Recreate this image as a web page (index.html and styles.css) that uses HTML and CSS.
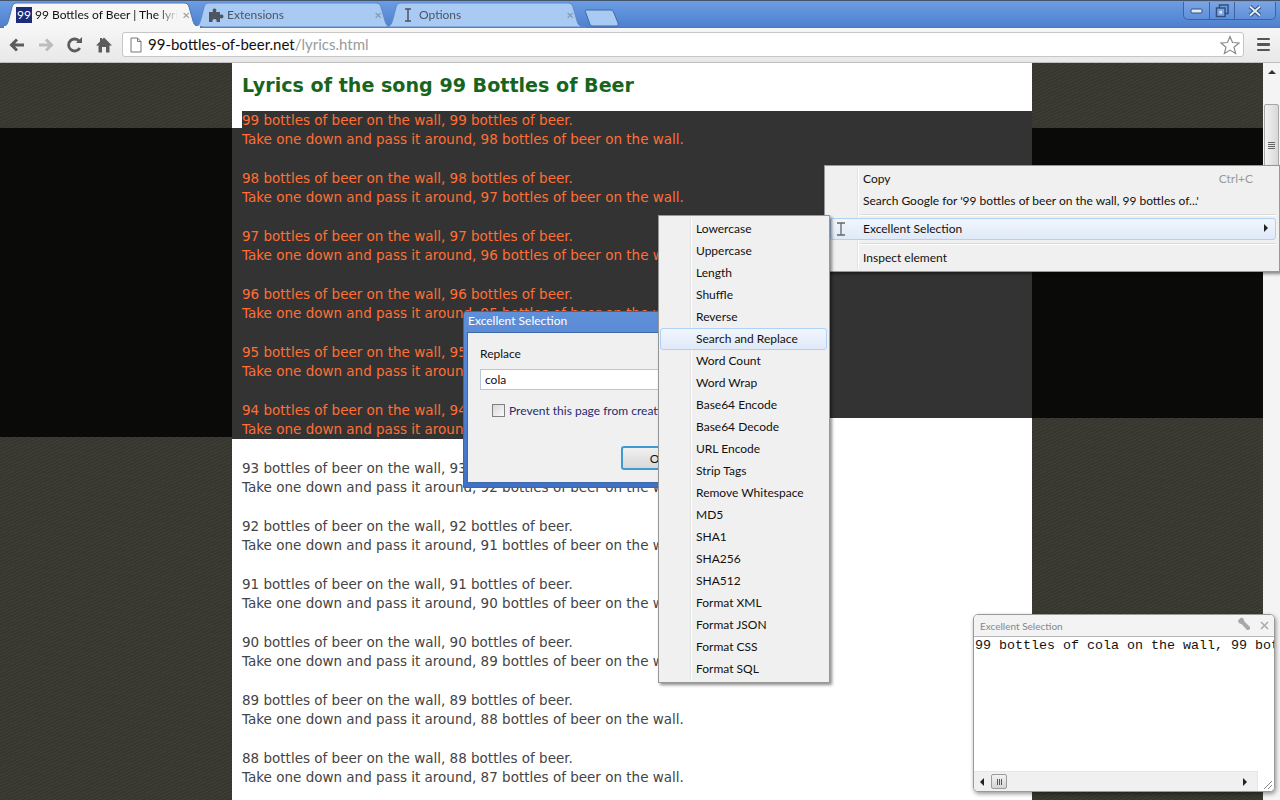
FILE: index.html
```html
<!DOCTYPE html>
<html lang="en">
<head>
    <meta charset="UTF-8">
    <meta name="viewport" content="width=device-width, initial-scale=1.0">
    <title>99 Bottles of Beer | The lyrics</title>
    <link rel="stylesheet" href="styles.css">
</head>
<body>
<div class="browser">
    <!-- Title bar and tabs -->
    <div class="titlebar">
        <div class="tabs">
            <div class="tab tab-active">
                <svg class="tab-shape" width="200" height="24" viewBox="0 0 200 24"><path d="M0,24 C5,24 6,20 8,12 L10,4 C11,1 12,0 15,0 L182,0 C185,0 186,1 187,4 L191,18 C192,22 194,24 200,24 Z" fill="#f6f6f6" stroke="#4f76b4"/></svg>
                <span class="favicon">99</span>
                <span class="tab-title">99 Bottles of Beer | The lyrics</span>
                <span class="tab-close">&#x2715;</span>
            </div>
            <div class="tab">
                <svg class="tab-shape" width="200" height="24" viewBox="0 0 200 24"><path d="M0,24 C5,24 6,20 8,12 L10,4 C11,1 12,0 15,0 L182,0 C185,0 186,1 187,4 L191,18 C192,22 194,24 200,24 Z" fill="#a9caf3" stroke="#5f88c6"/></svg>
                <svg class="tab-icon" width="16" height="16" viewBox="0 0 16 16"><path d="M1,5 H5 C4,3 5,1.500 6.500,1.500 C8,1.500 9,3 8,5 H12 V8 C14,7 15.500,8 15.500,9.500 C15.500,11 14,12 12,11 V15 H8.500 C9,13 8,12 6.500,12 C5,12 4,13 4.500,15 H1 Z" fill="#4d5560"/></svg>
                <span class="tab-title dim">Extensions</span>
                <span class="tab-close dim">&#x2715;</span>
            </div>
            <div class="tab">
                <svg class="tab-shape" width="200" height="24" viewBox="0 0 200 24"><path d="M0,24 C5,24 6,20 8,12 L10,4 C11,1 12,0 15,0 L182,0 C185,0 186,1 187,4 L191,18 C192,22 194,24 200,24 Z" fill="#a9caf3" stroke="#5f88c6"/></svg>
                <svg class="tab-icon" width="16" height="16" viewBox="0 0 16 16"><path d="M5,2 H11 M8,2 V14 M5,14 H11" fill="none" stroke="#4d5560" stroke-width="1.500"/></svg>
                <span class="tab-title dim">Options</span>
                <span class="tab-close dim">&#x2715;</span>
            </div>
            <svg class="new-tab" width="34" height="18" viewBox="0 0 34 18"><path d="M1,1 H25 C27,1 28,2 29,4 L33,14 C33.500,16 33,17 31,17 H8 C6,17 5,16 4.500,14 L0.500,3 C0.300,2 0.500,1 1,1 Z" fill="#a9caf3" stroke="#3f6aa8"/></svg>
        </div>
        <div class="window-controls">
            <div class="win-btn">
                <svg width="14" height="8" viewBox="0 0 14 8"><rect x="1" y="2" width="11" height="4" rx="1" fill="#dfe9f7" stroke="#30507f"/></svg>
            </div>
            <div class="win-btn win-max">
                <svg width="14" height="14" viewBox="0 0 14 14"><path d="M4.500,4 V1 H13 V9.500 H10" fill="none" stroke="#30507f" stroke-width="1.500"/><rect x="1.500" y="4" width="8.500" height="8.500" fill="#7fa6e0" stroke="#30507f" stroke-width="1.500"/><rect x="4.500" y="7" width="2.500" height="2.500" fill="#dfe9f7"/></svg>
            </div>
            <div class="win-btn win-close">
                <svg width="14" height="12" viewBox="0 0 14 12"><path d="M2,1.500 L12,10.500 M12,1.500 L2,10.500" stroke="#30507f" stroke-width="3.800"/><path d="M2,1.500 L12,10.500 M12,1.500 L2,10.500" stroke="#e4ecf8" stroke-width="1.800"/></svg>
            </div>
        </div>
    </div>

    <!-- Toolbar -->
    <div class="toolbar">
        <svg class="tool-btn" width="18" height="18" viewBox="0 0 18 18"><path d="M16,9 H4 M9,3.500 L3.500,9 L9,14.500" fill="none" stroke="#5c5c5c" stroke-width="3"/></svg>
        <svg class="tool-btn" width="18" height="18" viewBox="0 0 18 18"><path d="M2,9 H14 M9,3.500 L14.500,9 L9,14.500" fill="none" stroke="#bcbcbc" stroke-width="3"/></svg>
        <svg class="tool-btn" width="18" height="18" viewBox="0 0 18 18"><path d="M13.800,12 A6,6 0 1 1 13.500,5.500" fill="none" stroke="#5c5c5c" stroke-width="2.800"/><path d="M10,7 H16 V1 Z" fill="#5c5c5c"/></svg>
        <svg class="tool-btn" width="18" height="18" viewBox="0 0 18 18"><path d="M9,1.500 L17,9.500 H14.500 V16.500 H11 V11 H7 V16.500 H3.500 V9.500 H1 L5,5.500 V2 H7 V3.500 Z" fill="#5c5c5c"/></svg>
        <div class="omnibox">
            <svg class="page-icon" width="12" height="16" viewBox="0 0 12 16"><path d="M1,1 H7.500 L11,4.500 V15 H1 Z M7.500,1 V4.500 H11" fill="#fff" stroke="#777"/></svg>
            <span class="url">99-bottles-of-beer.net<span class="url-path">/lyrics.html</span></span>
            <svg class="star" width="20" height="20" viewBox="0 0 20 20"><path d="M10,1.500 L12.500,7.500 L19,8 L14,12.200 L15.600,18.500 L10,15.100 L4.400,18.500 L6,12.200 L1,8 L7.500,7.500 Z" fill="#fff" stroke="#8c8c8c" stroke-width="1.200"/></svg>
        </div>
        <div class="menu-btn"><i></i><i></i><i></i></div>
    </div>

    <!-- Page -->
    <div class="viewport">
        <div class="gutter gutter-left"><div class="sel-band"></div></div>
        <div class="content">
            <h1>Lyrics of the song 99 Bottles of Beer</h1>
            <div class="selected">
                <p>99 bottles of beer on the wall, 99 bottles of beer.<br>Take one down and pass it around, 98 bottles of beer on the wall.</p>
                <p>98 bottles of beer on the wall, 98 bottles of beer.<br>Take one down and pass it around, 97 bottles of beer on the wall.</p>
                <p>97 bottles of beer on the wall, 97 bottles of beer.<br>Take one down and pass it around, 96 bottles of beer on the wall.</p>
                <p>96 bottles of beer on the wall, 96 bottles of beer.<br>Take one down and pass it around, 95 bottles of beer on the wall.</p>
                <p>95 bottles of beer on the wall, 95 bottles of beer.<br>Take one down and pass it around, 94 bottles of beer on the wall.</p>
                <p>94 bottles of beer on the wall, 94 bottles of beer.</p>
            </div>
            <p class="selected-end">Take one down and pass it around, 93 bottles of beer on the wall.</p>
            <p>93 bottles of beer on the wall, 93 bottles of beer.<br>Take one down and pass it around, 92 bottles of beer on the wall.</p>
            <p>92 bottles of beer on the wall, 92 bottles of beer.<br>Take one down and pass it around, 91 bottles of beer on the wall.</p>
            <p>91 bottles of beer on the wall, 91 bottles of beer.<br>Take one down and pass it around, 90 bottles of beer on the wall.</p>
            <p>90 bottles of beer on the wall, 90 bottles of beer.<br>Take one down and pass it around, 89 bottles of beer on the wall.</p>
            <p>89 bottles of beer on the wall, 89 bottles of beer.<br>Take one down and pass it around, 88 bottles of beer on the wall.</p>
            <p>88 bottles of beer on the wall, 88 bottles of beer.<br>Take one down and pass it around, 87 bottles of beer on the wall.</p>
        </div>
        <div class="gutter gutter-right"><div class="sel-band sel-band-short"></div></div>
        <div class="scrollbar">
            <span class="scroll-arrow"></span>
            <div class="scroll-thumb"><i></i><i></i><i></i><i></i></div>
        </div>
    </div>
</div>

<!-- Prompt dialog -->
<div class="dialog">
    <div class="dialog-title">Excellent Selection</div>
    <div class="dialog-body">
        <div class="dialog-label">Replace</div>
        <div class="dialog-input">cola</div>
        <div class="dialog-check"><span class="checkbox"></span>Prevent this page from creating additional dialogs.</div>
        <div class="dialog-actions"><span class="dialog-ok">OK</span></div>
    </div>
</div>

<!-- Context menu -->
<div class="menu context-menu">
    <div class="menu-item"><span>Copy</span><span class="shortcut">Ctrl+C</span></div>
    <div class="menu-item">Search Google for '99 bottles of beer on the wall, 99 bottles of...'</div>
    <div class="menu-sep"></div>
    <div class="menu-item menu-hover">
        <svg class="menu-icon" width="10" height="14" viewBox="0 0 10 14"><path d="M1,1 H9 M5,1 V13 M1,13 H9" fill="none" stroke="#666" stroke-width="1.300"/></svg>
        <span>Excellent Selection</span><span class="submenu-arrow"></span>
    </div>
    <div class="menu-sep"></div>
    <div class="menu-item">Inspect element</div>
</div>

<!-- Submenu -->
<div class="menu sub-menu">
    <div class="menu-item">Lowercase</div>
    <div class="menu-item">Uppercase</div>
    <div class="menu-item">Length</div>
    <div class="menu-item">Shuffle</div>
    <div class="menu-item">Reverse</div>
    <div class="menu-item menu-hover">Search and Replace</div>
    <div class="menu-item">Word Count</div>
    <div class="menu-item">Word Wrap</div>
    <div class="menu-item">Base64 Encode</div>
    <div class="menu-item">Base64 Decode</div>
    <div class="menu-item">URL Encode</div>
    <div class="menu-item">Strip Tags</div>
    <div class="menu-item">Remove Whitespace</div>
    <div class="menu-item">MD5</div>
    <div class="menu-item">SHA1</div>
    <div class="menu-item">SHA256</div>
    <div class="menu-item">SHA512</div>
    <div class="menu-item">Format XML</div>
    <div class="menu-item">Format JSON</div>
    <div class="menu-item">Format CSS</div>
    <div class="menu-item">Format SQL</div>
</div>

<!-- Result panel -->
<div class="panel">
    <div class="panel-title">
        <span>Excellent Selection</span>
        <svg class="panel-wrench" width="14" height="14" viewBox="0 0 14 14"><path d="M1,3.500 L3.500,1 C5.500,0.500 7,1.500 7,3.500 L7.500,4.500 L13,10 L13,12 L11.500,13 L10,13 L4.500,7 C2.500,7 1,5.500 1,3.500 Z" fill="#a8a8a8"/></svg>
        <svg class="panel-close" width="9" height="9" viewBox="0 0 9 9"><path d="M1,1 L8,8 M8,1 L1,8" stroke="#aaa" stroke-width="1.500"/></svg>
    </div>
    <div class="panel-text">99 bottles of cola on the wall, 99 bottles of beer.</div>
    <div class="panel-bottom">
        <div class="hscroll">
            <span class="arrow-left"></span>
            <div class="hscroll-thumb"><i></i><i></i><i></i></div>
            <span class="arrow-right"></span>
        </div>
        <svg class="resizer" width="16" height="20" viewBox="0 0 16 20"><path d="M6,18 L14,10 M10,18 L14,14" stroke="#888"/></svg>
    </div>
</div>
</body>
</html>
```

FILE: styles.css
```css
html, body {
    margin: 0;
    height: 100%;
    overflow: hidden;
}
body {
    font-family: Lato, "Noto Sans", sans-serif;
    font-size: 12px;
    color: #111;
}
.browser {
    display: flex;
    flex-direction: column;
    height: 100vh;
}

/* title bar */
.titlebar {
    display: flex;
    justify-content: space-between;
    height: 27px;
    flex: none;
    box-sizing: border-box;
    padding-top: 3px;
    border-top: 1px solid #44546c;
    background: linear-gradient(#6b9de3, #4f80cd);
}
.tabs {
    display: flex;
    align-items: flex-start;
    padding-left: 2px;
    margin-top: -1px;
}
.tab {
    position: relative;
    display: flex;
    align-items: center;
    width: 192px;
    height: 24px;
    padding: 0 4px 0 14px;
    box-sizing: border-box;
    flex: none;
}
.tab-shape {
    position: absolute;
    left: 0;
    top: 0;
    overflow: visible;
}
.tab-active {
    z-index: 2;
}
.tab-active::after {
    content: "";
    position: absolute;
    left: 2px;
    width: 196px;
    bottom: -1px;
    height: 2px;
    background: #f6f6f6;
}
.favicon, .tab-icon, .tab-title, .tab-close {
    position: relative;
}
.favicon {
    width: 16px;
    height: 16px;
    background: #1c2c78;
    color: #fff;
    font-size: 12px;
    line-height: 16px;
    text-align: center;
    flex: none;
}
.tab-icon {
    flex: none;
}
.tab-title {
    margin-left: 3px;
    padding-bottom: 2px;
    flex: 1;
    overflow: hidden;
    white-space: nowrap;
    font-size: 12px;
    color: #111;
    -webkit-mask-image: linear-gradient(to right, #000 85%, transparent);
    mask-image: linear-gradient(to right, #000 85%, transparent);
}
.tab-title.dim {
    color: #4a5566;
}
.tab-close {
    font-size: 10px;
    color: #9a9a9a;
    margin-left: 4px;
}
.tab-close.dim {
    color: #7f95b5;
}
.new-tab {
    margin: 6px 0 0 7px;
}
.window-controls {
    display: flex;
    height: 17px;
    margin: -2px 4px 0 0;
    border: 1px solid #3f6299;
    border-top: 0;
    border-radius: 0 0 5px 5px;
    background: linear-gradient(#7ba5e3, #5f8fdb);
}
.win-btn {
    display: flex;
    align-items: center;
    justify-content: center;
    width: 25px;
    border-right: 1px solid #3f6299;
}
.win-btn.win-max {
    width: 24px;
}
.win-btn.win-close {
    width: 40px;
    border-right: 0;
}

/* toolbar */
.toolbar {
    display: flex;
    align-items: center;
    height: 36px;
    flex: none;
    box-sizing: border-box;
    padding: 0 10px 1px 8px;
    border-top: 1px solid #4a78c0;
    background: linear-gradient(#f6f6f6, #e8e8e8);
    border-bottom: 1px solid #bfbfbf;
}
.tool-btn {
    margin-right: 11px;
    flex: none;
}
.omnibox {
    display: flex;
    align-items: center;
    flex: 1;
    height: 25px;
    margin-left: -2px;
    padding: 0 3px 0 7px;
    box-sizing: border-box;
    background: #fff;
    border: 1px solid #c6c6c6;
    border-radius: 3px;
}
.page-icon {
    flex: none;
}
.url {
    flex: 1;
    margin-left: 6px;
    padding-bottom: 2px;
    font-size: 15px;
    color: #111;
}
.url-path {
    color: #9a9a9a;
}
.menu-btn {
    display: flex;
    flex-direction: column;
    gap: 3px;
    width: 13px;
    margin-left: 13px;
    flex: none;
}
.menu-btn i {
    display: block;
    height: 2.500px;
    background: #555;
    border-radius: 1px;
}

/* page */
.viewport {
    display: flex;
    flex: 1;
    min-height: 0;
    overflow: hidden;
}
.gutter {
    background-color: #3a3a33;
    background-image: repeating-linear-gradient(155deg, #3e3e36 0 1px, #37372f 1px 3px);
    padding-top: 65px;
}
.gutter-left {
    width: 232px;
    flex: none;
}
.gutter-right {
    width: 231px;
    flex: none;
}
.sel-band {
    height: 309px;
    background: #0a0a08;
}
.sel-band-short {
    height: 290px;
}
.content {
    width: 800px;
    flex: none;
    box-sizing: border-box;
    padding: 0 10px;
    background: #fff;
    font-family: "DejaVu Sans", sans-serif;
    font-size: 13.500px;
    line-height: 19.330px;
    color: #444;
}
.content h1 {
    margin: 0;
    height: 48px;
    padding-top: 9px;
    box-sizing: border-box;
    font-size: 19.100px;
    line-height: 28px;
    font-weight: bold;
    color: #17651c;
}
.content p {
    margin: 0 0 19.330px;
    white-space: nowrap;
}
.selected {
    position: relative;
    height: 307px;
    margin: 0 -10px;
    padding-left: 10px;
    background: #333;
    color: #ff6f35;
}
.selected::before {
    content: "";
    position: absolute;
    left: 0;
    top: 0;
    width: 10px;
    height: 17px;
    background: #fff;
}
.selected p:last-child {
    margin-bottom: 0;
}
.content .selected-end {
    width: 441px;
    height: 19px;
    margin-left: -10px;
    margin-bottom: 19.660px;
    padding: 2px 0 0 10px;
    background: #333;
    color: #ff6f35;
}
.scrollbar {
    position: relative;
    flex: 1;
    background: #f4f4f4;
}
.scroll-arrow {
    position: absolute;
    left: 5px;
    top: 7px;
    border: 4px solid transparent;
    border-top: 0;
    border-bottom: 4px solid #333;
}
.scroll-thumb {
    position: absolute;
    left: 1px;
    top: 41px;
    width: 15px;
    height: 82px;
    display: flex;
    flex-direction: column;
    align-items: center;
    justify-content: center;
    gap: 1px;
    box-sizing: border-box;
    border: 1px solid #a8a8a8;
    border-radius: 2px;
    background: linear-gradient(to right, #f2f2f2, #d8d8d8);
}
.scroll-thumb i {
    display: block;
    width: 7px;
    height: 1px;
    background: #666;
}

/* dialog */
.dialog {
    position: absolute;
    left: 463px;
    top: 311px;
    width: 340px;
    height: 177px;
    box-sizing: border-box;
    padding: 0 3px 4px;
    display: flex;
    flex-direction: column;
    background: linear-gradient(#5f8fd8, #3f72c4);
    border: 1px solid #3a66ab;
    border-radius: 3px 3px 0 0;
}
.dialog-title {
    height: 20px;
    line-height: 17px;
    padding-left: 1px;
    color: #fff;
    font-size: 12px;
}
.dialog-body {
    flex: 1;
    padding: 0 12px;
    background: #f0f0f0;
    border: 1px solid #3f68a8;
}
.dialog-label {
    margin-top: 13px;
    height: 23px;
    line-height: 16px;
    color: #111;
}
.dialog-input {
    height: 21px;
    line-height: 20px;
    box-sizing: border-box;
    padding-left: 4px;
    background: #fff;
    border: 1px solid #b8c6d6;
    color: #111;
}
.dialog-check {
    display: flex;
    align-items: center;
    margin: 13px 0 2px 12px;
    height: 14px;
    white-space: nowrap;
    color: #2a2a70;
}
.checkbox {
    width: 11px;
    height: 11px;
    flex: none;
    margin-right: 4px;
    background: linear-gradient(135deg, #d8d8d8, #fafafa);
    border: 1px solid #808080;
}
.dialog-actions {
    margin-top: 29px;
    padding-left: 141px;
}
.dialog-ok {
    display: block;
    width: 75px;
    height: 24px;
    line-height: 22px;
    box-sizing: border-box;
    text-align: center;
    background: linear-gradient(#f0f0f0, #d8d8d8);
    border: 2px solid #3d9bd4;
    border-radius: 3px;
}

/* menus */
.menu {
    position: absolute;
    box-sizing: border-box;
    background: #f0f0f0;
    border: 1px solid #979797;
    box-shadow: 2px 2px 3px rgba(0, 0, 0, 0.45);
}
.menu::before {
    content: "";
    position: absolute;
    top: 2px;
    bottom: 2px;
    width: 1px;
    background: #e2e2e2;
    border-right: 1px solid #fff;
}
.menu-item {
    position: relative;
    display: flex;
    justify-content: space-between;
    align-items: center;
    height: 22px;
    padding-bottom: 2px;
    box-sizing: border-box;
    white-space: nowrap;
    color: #111;
    font-size: 12px;
}
.menu-hover {
    background: linear-gradient(#f2f6fc, #dfe9f8);
    border: 1px solid #afd0f7;
    border-radius: 3px;
}
.context-menu {
    left: 824px;
    top: 165px;
    width: 456px;
    height: 107px;
    padding: 2px 3px 0 5px;
}
.context-menu::before {
    left: 32px;
}
.context-menu .menu-item {
    padding-left: 33px;
    padding-right: 9px;
}
.context-menu .menu-hover {
    padding-left: 32px;
    padding-right: 7px;
}
.shortcut {
    color: #9a9a9a;
    margin-right: 14px;
}
.menu-icon {
    position: absolute;
    left: 5px;
    top: 3px;
}
.submenu-arrow {
    border: 4px solid transparent;
    border-right: 0;
    border-left: 4px solid #222;
}
.menu-sep {
    height: 1px;
    margin: 2px 0 2px 29px;
    background: #dcdcdc;
    border-bottom: 1px solid #fff;
}
.menu-hover + .menu-sep {
    margin-top: 3px;
}
.sub-menu {
    left: 658px;
    top: 215px;
    width: 172px;
    height: 468px;
    padding: 2px 2px 0 1px;
}
.sub-menu::before {
    left: 31px;
}
.sub-menu .menu-item {
    padding-left: 36px;
}
.sub-menu .menu-hover {
    padding-left: 35px;
}

/* result panel */
.panel {
    position: absolute;
    left: 973px;
    top: 614px;
    width: 302px;
    height: 178px;
    display: flex;
    flex-direction: column;
    box-sizing: border-box;
    background: #fff;
    border: 1px solid #999;
    border-radius: 5px;
    box-shadow: 1px 2px 4px rgba(0, 0, 0, 0.4);
    overflow: hidden;
}
.panel-title {
    display: flex;
    align-items: center;
    height: 21px;
    flex: none;
    padding-left: 6px;
    background: #f3f3f3;
    border-bottom: 1px solid #b4b4b4;
    color: #888;
    font-size: 10px;
}
.panel-title span {
    flex: 1;
}
.panel-wrench {
    margin: -4px 9px 0 0;
}
.panel-close {
    margin: 0 5px 0 0;
}
.panel-text {
    flex: 1;
    padding: 1px 0 0 1px;
    font-family: "Liberation Mono", monospace;
    font-size: 13.330px;
    line-height: 15px;
    color: #111;
    white-space: nowrap;
    overflow: hidden;
}
.panel-bottom {
    display: flex;
    align-items: stretch;
    height: 20px;
    flex: none;
}
.hscroll {
    display: flex;
    align-items: center;
    flex: 1;
    padding: 0 10px 0 6px;
    background: #f0f0f0;
    border-top: 1px solid #e6e6e6;
}
.arrow-left {
    border: 4px solid transparent;
    border-left: 0;
    border-right: 4px solid #222;
}
.arrow-right {
    margin-left: auto;
    border: 4px solid transparent;
    border-right: 0;
    border-left: 4px solid #222;
}
.hscroll-thumb {
    display: flex;
    align-items: center;
    justify-content: center;
    gap: 1px;
    width: 14px;
    height: 13px;
    margin-left: 7px;
    background: linear-gradient(#f2f2f2, #d4d4d4);
    border: 1px solid #9a9a9a;
    border-radius: 2px;
}
.hscroll-thumb i {
    display: block;
    width: 1px;
    height: 6px;
    background: #555;
}
.resizer {
    background: #fff;
    flex: none;
    border-left: 1px solid #e6e6e6;
}
```
